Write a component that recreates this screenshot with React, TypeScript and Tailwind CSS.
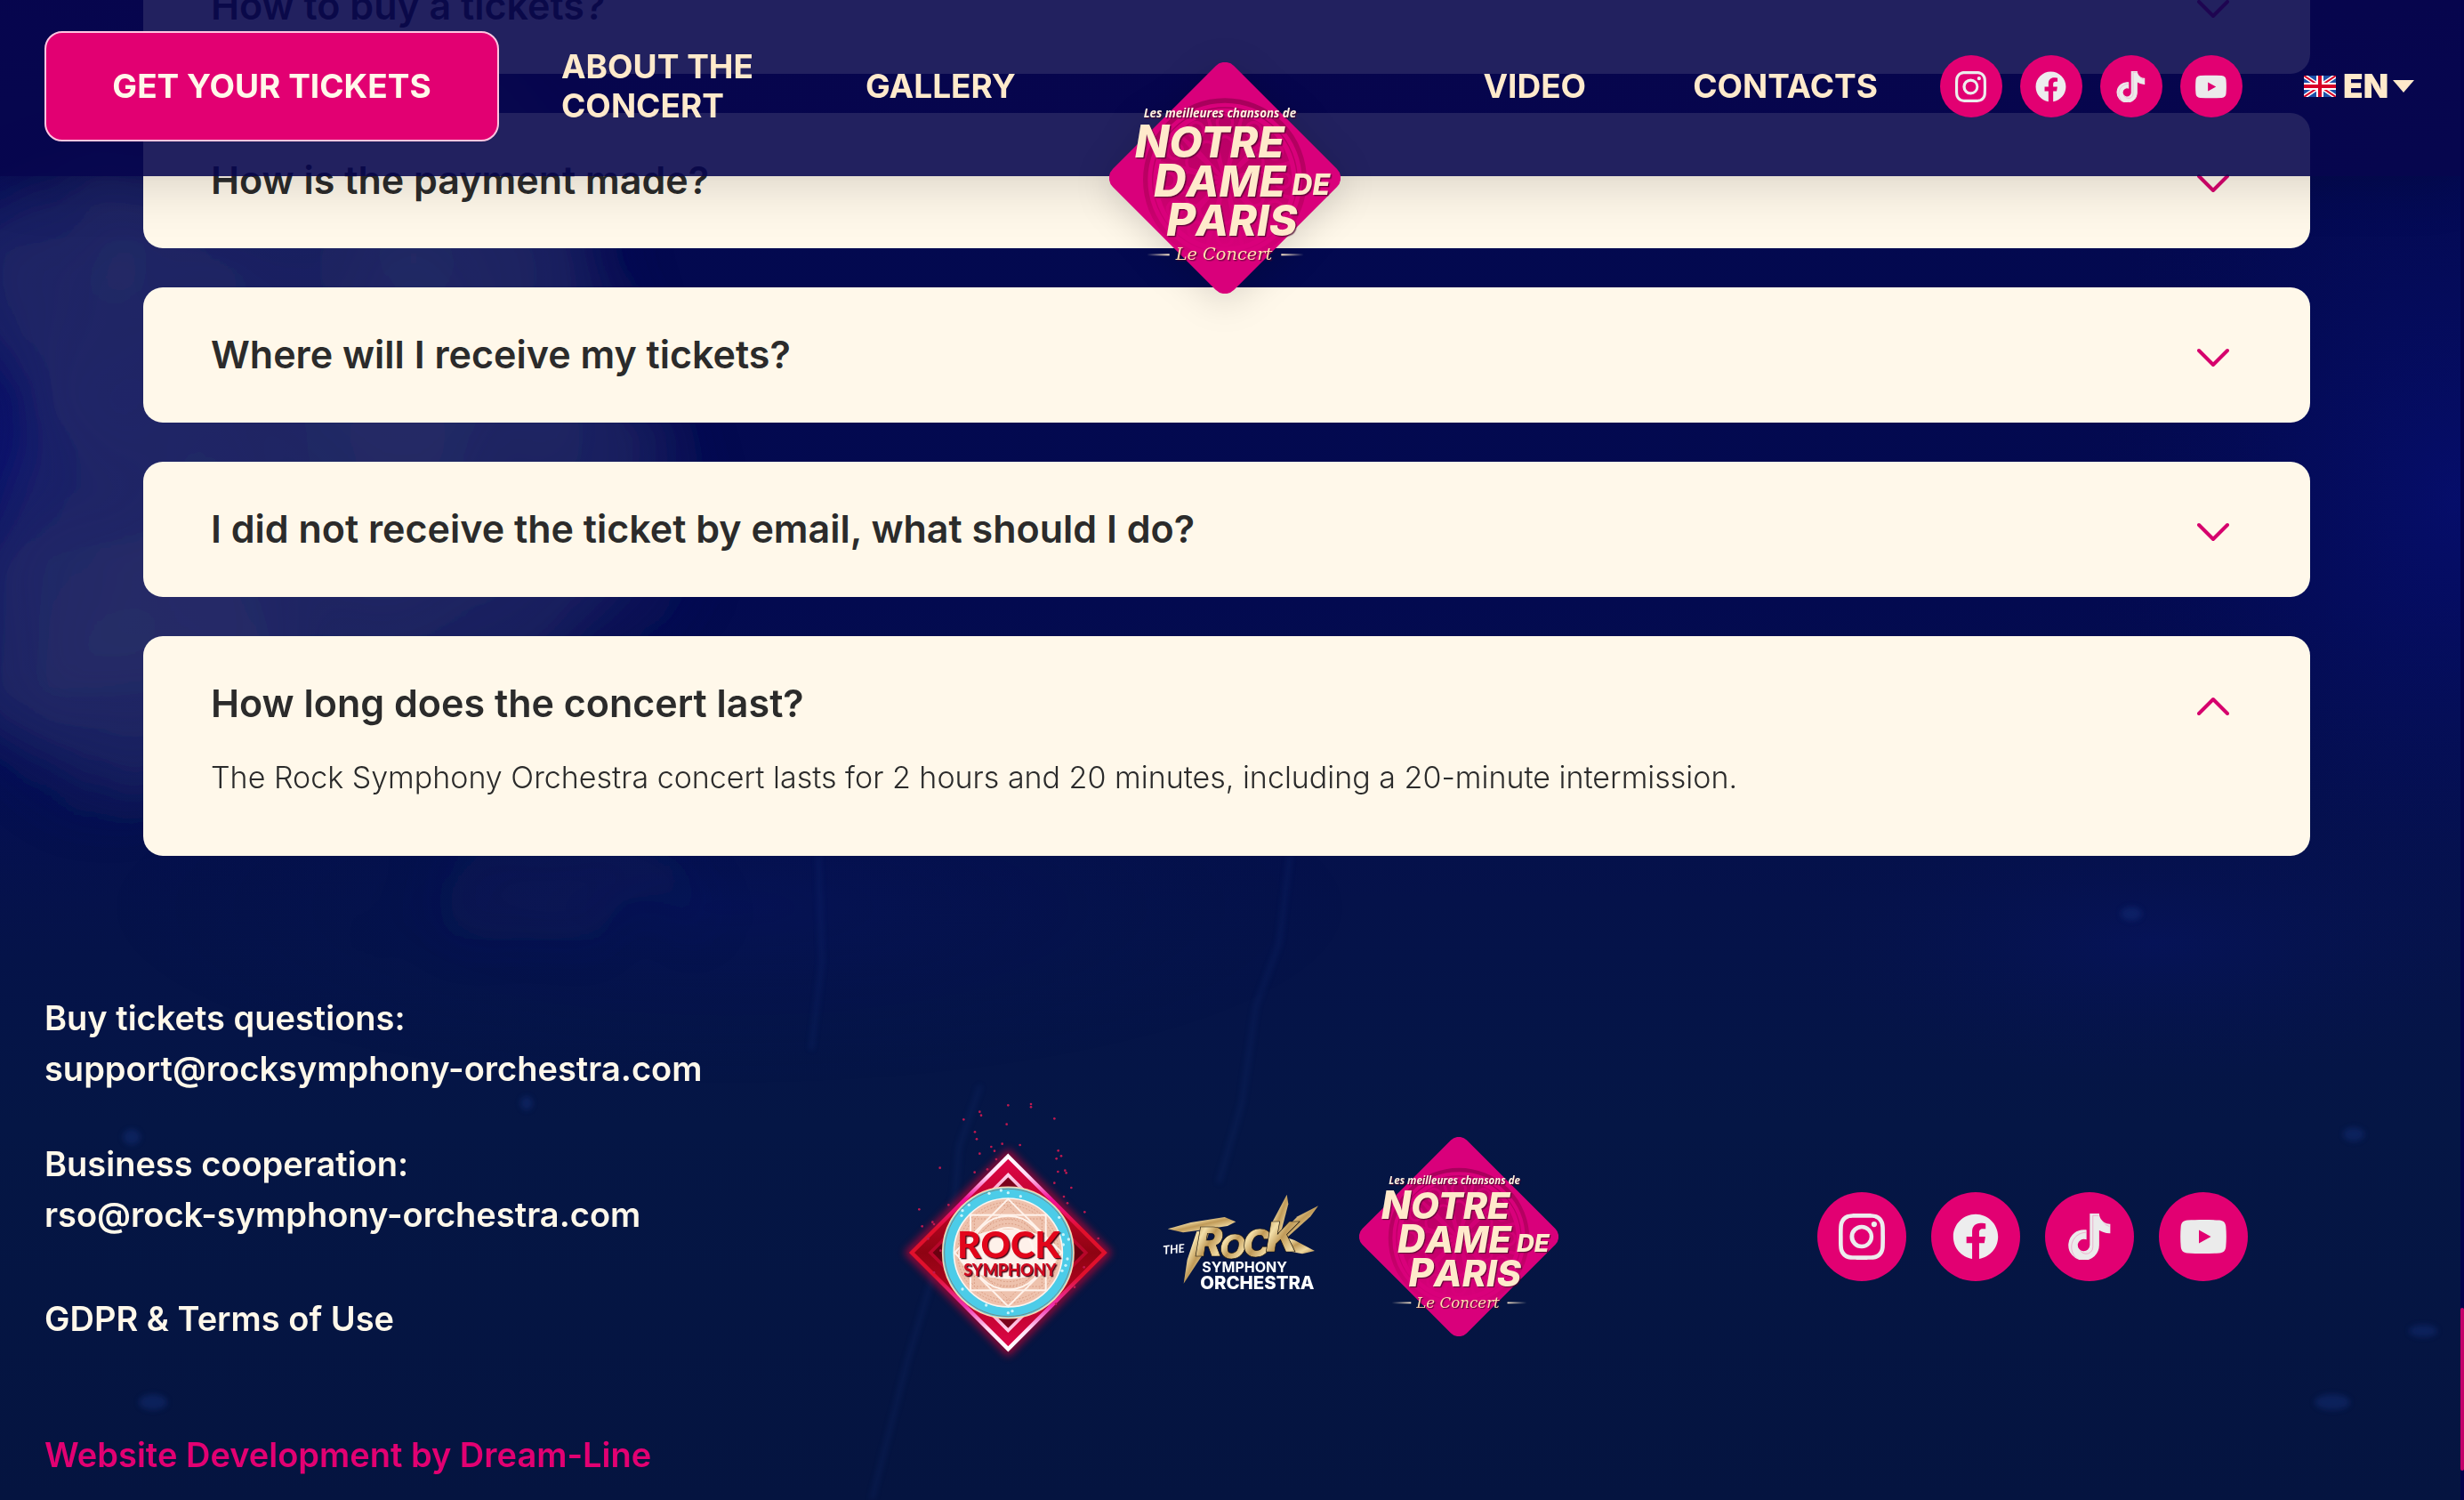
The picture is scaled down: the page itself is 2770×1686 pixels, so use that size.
import { useState } from 'react';
import { BsInstagram } from 'react-icons/bs';
import { FaFacebook } from 'react-icons/fa';

const faqItems = [
    { question: 'How to buy a tickets?', answer: '' },
    { question: 'How is the payment made?', answer: '' },
    { question: 'Where will I receive my tickets?', answer: '' },
    { question: 'I did not receive the ticket by email, what should I do?', answer: '' },
    {
        question: 'How long does the concert last?',
        answer: 'The Rock Symphony Orchestra concert lasts for 2 hours and 20 minutes, including a 20-minute intermission.'
    }
];

const petals = [0, 30, 60, 90, 120, 150, 180, 210, 240, 270, 300, 330];

const tiktokPath =
    'M448,209.91a210.06,210.06,0,0,1-122.77-39.25V349.38A162.55,162.55,0,1,1,185,188.31V278.2a74.62,74.62,0,1,0,52.23,71.18V0l88,0a121.18,121.18,0,0,0,1.86,22.17h0A122.18,122.18,0,0,0,381,102.39a121.43,121.43,0,0,0,67,20.14Z';

function TiktokIcon({ className }: { className?: string }) {
    return (
        <svg viewBox="0 0 512 512" className={className} fill="none">
            <clipPath id="tiktok-clip">
                <path d={tiktokPath} />
            </clipPath>
            <g transform="translate(30 0)">
                <path d={tiktokPath} fill="#ebebeb" stroke="#ebebeb" strokeWidth="16" />
                <g clipPath="url(#tiktok-clip)" stroke="#f07ab4" strokeWidth="5">
                    <path d={tiktokPath} transform="translate(26 22)" />
                </g>
            </g>
        </svg>
    );
}

function YoutubeIcon({ className }: { className?: string }) {
    return (
        <svg viewBox="0 0 52 52" className={className}>
            <path
                fill="#ebebeb"
                fillRule="evenodd"
                d="M8 7.6C19 6.8 33 6.8 44 7.6c4.6.4 6.8 2.8 7.3 7C52 22 52 30 51.3 37.400c-.5 4.200-2.700 6.600-7.300 7-11 .8-25 .8-36 0-4.600-.4-6.800-2.800-7.300-7C0 30 0 22 .7 14.600c.5-4.200 2.700-6.600 7.300-7ZM21 18.500v15L34.500 26Z"
            />
        </svg>
    );
}

const socials = [
    { label: 'Instagram', icon: BsInstagram },
    { label: 'Facebook', icon: FaFacebook },
    { label: 'TikTok', icon: TiktokIcon },
    { label: 'YouTube', icon: YoutubeIcon }
];

function ConcertLogo({ className }: { className?: string }) {
    return (
        <svg viewBox="78 59 780 780" className={className} role="img" aria-label="Notre Dame de Paris, Le Concert">
            <defs>
                <linearGradient id="rose-fade" x1="0" y1="0" x2="0" y2="1">
                    <stop offset="0" stopColor="#a8005c" />
                    <stop offset="0.6" stopColor="#b8005f" stopOpacity="0.8" />
                    <stop offset="1" stopColor="#c80070" stopOpacity="0.3" />
                </linearGradient>
                <linearGradient id="line-left">
                    <stop offset="0" stopColor="#ffeacb" stopOpacity="0" />
                    <stop offset="1" stopColor="#ffeacb" />
                </linearGradient>
                <linearGradient id="line-right">
                    <stop offset="0" stopColor="#ffeacb" />
                    <stop offset="1" stopColor="#ffeacb" stopOpacity="0" />
                </linearGradient>
            </defs>
            <rect x="179" y="160" width="578" height="578" rx="44" fill="#d9007b" transform="rotate(45 468 449)" />
            <g fill="none" stroke="url(#rose-fade)">
                <circle cx="468" cy="456" r="268" strokeWidth="16" />
                <circle cx="468" cy="456" r="244" strokeWidth="4" />
            </g>
            <circle cx="468" cy="456" r="226" fill="url(#rose-fade)" opacity="0.75" />
            <g fill="none" stroke="#d9007b" strokeWidth="10" opacity="0.7">
                {petals.map((angle) => (
                    <g key={angle} transform={`rotate(${angle} 468 456)`}>
                        <path d="M468 456 L440 330 Q468 290 496 330 Z" />
                        <path d="M440 330 L408 238 M496 330 L528 238" />
                        <circle cx="468" cy="262" r="26" />
                    </g>
                ))}
            </g>
            <g
                className="drop-shadow-[4px_4px_1px_rgba(70,0,40,0.75)]"
                fill="#ffeacb"
                fontFamily="Inter, sans-serif"
                fontStyle="italic"
                fontWeight="800"
            >
                <text x="194" y="244" fontSize="40" fontWeight="700" fill="#fff3e0" fontFamily="'Open Sans', sans-serif">
                    Les meilleures chansons de
                </text>
                <text x="164" y="381" fontSize="144">
                    <tspan fontSize="152">N</tspan>OTRE
                </text>
                <text x="228" y="513" fontSize="144">
                    <tspan fontSize="152">D</tspan>AME
                </text>
                <text x="271" y="643" fontSize="144">
                    <tspan fontSize="152">P</tspan>ARIS
                </text>
                <text x="694" y="507" fontSize="96">DE</text>
                <text x="302" y="726" fontSize="58" fontWeight="400" fill="#ffdfae" fontFamily="'DejaVu Serif', serif">
                    Le Concert
                </text>
            </g>
            <rect x="205" y="705" width="76" height="6" fill="url(#line-left)" />
            <rect x="658" y="705" width="76" height="6" fill="url(#line-right)" />
        </svg>
    );
}

const sparks = [
    [400, 70], [477, 66], [477, 76], [304, 92], [309, 104], [250, 118], [556, 115], [395, 134], [288, 160],
    [294, 184], [380, 200], [440, 204], [343, 210], [354, 224], [304, 233], [569, 223], [579, 241], [563, 250],
    [170, 281], [287, 296], [568, 294], [592, 290], [596, 298], [556, 332], [613, 348], [588, 378], [600, 400],
    [100, 421], [658, 430], [199, 406], [110, 478], [145, 464], [150, 471], [704, 519], [624, 683], [561, 740],
    [130, 520], [172, 560], [656, 616], [150, 634], [330, 286], [360, 252]
];

const glints = [
    [268, 406], [246, 425], [243, 442], [400, 365], [376, 357], [442, 377], [336, 367], [586, 506], [604, 522],
    [586, 540], [594, 610], [582, 628], [600, 588], [246, 690], [326, 744], [400, 770], [414, 764], [572, 448]
];

function RockSymphonyLogo() {
    return (
        <svg viewBox="0 0 810 1026" className="h-[342px] w-[270px]" role="img" aria-label="Rock Symphony">
            <defs>
                <linearGradient id="rs-edge" x1="0" y1="0" x2="0" y2="1">
                    <stop offset="0" stopColor="#ffffff" />
                    <stop offset="0.1" stopColor="#ffd9f6" />
                    <stop offset="0.22" stopColor="#f5109a" />
                    <stop offset="0.38" stopColor="#e0102c" />
                    <stop offset="0.62" stopColor="#e0102c" />
                    <stop offset="0.78" stopColor="#f030b0" />
                    <stop offset="0.9" stopColor="#ffe0f4" />
                    <stop offset="1" stopColor="#ffffff" />
                </linearGradient>
                <linearGradient id="rs-fill" x1="0" y1="0" x2="0" y2="1">
                    <stop offset="0" stopColor="#e0054a" />
                    <stop offset="0.35" stopColor="#b0041f" />
                    <stop offset="0.5" stopColor="#8e0312" />
                    <stop offset="0.7" stopColor="#b0041f" />
                    <stop offset="1" stopColor="#e0054a" />
                </linearGradient>
                <linearGradient id="rs-inner" x1="0" y1="0" x2="0" y2="1">
                    <stop offset="0" stopColor="#ffd0ea" />
                    <stop offset="0.12" stopColor="#f8a0cc" />
                    <stop offset="0.28" stopColor="#b8062a" />
                    <stop offset="0.72" stopColor="#b8062a" />
                    <stop offset="0.88" stopColor="#f8a0cc" />
                    <stop offset="1" stopColor="#ffd0ea" />
                </linearGradient>
                <filter id="rs-glow" x="-20%" y="-20%" width="140%" height="140%">
                    <feGaussianBlur stdDeviation="14" />
                </filter>
            </defs>
            <path d="M400 236 731 567 400 898 69 567Z" fill="none" stroke="#e0002f" strokeWidth="26" opacity="0.75" filter="url(#rs-glow)" />
            <path d="M400 242 725 567 400 892 75 567Z" fill="url(#rs-fill)" stroke="url(#rs-edge)" strokeWidth="13" />
            <path d="M400 305 662 567 400 829 138 567Z" fill="#5a0210" fillOpacity="0.7" stroke="url(#rs-inner)" strokeWidth="11" />
            <circle cx="400" cy="567" r="221" fill="#4ccce8" stroke="#f3d7b4" strokeWidth="5" />
            <circle cx="400" cy="567" r="215" fill="none" stroke="#8a6a58" strokeWidth="2" />
            <circle cx="400" cy="567" r="183" fill="#eec2ad" stroke="#fff4ee" strokeWidth="5" />
            <g fill="none" stroke="#d99a80" strokeWidth="3" strokeDasharray="5 6">
                <circle cx="400" cy="567" r="170" />
                <circle cx="400" cy="567" r="160" />
                <circle cx="400" cy="567" r="112" />
                <circle cx="400" cy="567" r="98" />
                <rect x="286" y="453" width="228" height="228" />
                <path d="M400 410 557 567 400 724 243 567Z" />
            </g>
            <g fill="none" stroke="#fff3ec" strokeWidth="6">
                <rect x="273" y="440" width="254" height="254" />
                <path d="M400 386 581 567 400 748 219 567Z" />
                <circle cx="400" cy="567" r="124" />
                <circle cx="400" cy="567" r="84" />
            </g>
            <ellipse cx="400" cy="572" rx="168" ry="84" fill="#fff6f1" opacity="0.9" />
            <g
                className="drop-shadow-[4px_4px_0_#4a0a18]"
                fontFamily="Lato, sans-serif"
                fontWeight="900"
                textAnchor="middle"
            >
                <text x="402" y="586" fontSize="124" fill="#e3061b">ROCK</text>
                <text x="406" y="646" fontSize="54" fill="#d20a20">SYMPHONY</text>
            </g>
            <g fill="#c01850">
                {sparks.map(([x, y]) => (
                    <circle key={`${x}-${y}`} cx={x} cy={y} r="4" />
                ))}
            </g>
            <g fill="#c9f4fb">
                {glints.map(([x, y]) => (
                    <circle key={`${x}-${y}`} cx={x} cy={y} r="5" />
                ))}
            </g>
        </svg>
    );
}

function OrchestraLogo() {
    return (
        <svg viewBox="-30 0 720 480" className="h-[160px] w-[240px]" role="img" aria-label="The Rock Symphony Orchestra">
            <defs>
                <linearGradient id="gold" x1="0" y1="0" x2="1" y2="1">
                    <stop offset="0" stopColor="#b48a44" />
                    <stop offset="0.3" stopColor="#f3dfa8" />
                    <stop offset="0.5" stopColor="#c09a58" />
                    <stop offset="0.75" stopColor="#f0d9a0" />
                    <stop offset="1" stopColor="#b08642" />
                </linearGradient>
            </defs>
            {/* brush swashes round the word */}
            <g fill="url(#gold)">
                <path d="M98 214 176 192 290 174 328 190 300 204 206 218 150 226Z" />
                <path d="M196 222 240 218 214 304 152 398 164 318Z" />
                <path d="M446 200 500 98 505 130 474 250 440 270Z" />
                <path d="M472 236 536 172 606 136 580 172 500 244Z" />
                <path d="M474 234 526 252 594 288 552 298 500 288Z" />
            </g>
            <g fill="url(#gold)" stroke="#16100a" strokeWidth="2" fontFamily="Inter, sans-serif" fontWeight="900" fontStyle="italic">
                <text x="192" y="306" fontSize="138">R</text>
                <text x="272" y="314" fontSize="116">O</text>
                <text x="350" y="308" fontSize="130">C</text>
                <text x="430" y="290" fontSize="142">K</text>
            </g>
            <text x="84" y="300" fontSize="40" fill="#ffffff" fontFamily="Lato, sans-serif" fontStyle="italic" fontWeight="700" transform="rotate(-6 84 300)">
                THE
            </text>
            <g fill="#ffffff" fontFamily="Inter, sans-serif" fontWeight="800">
                <text x="214" y="361" fontSize="48" fontWeight="700">SYMPHONY</text>
                <text x="208" y="416" fontSize="61">ORCHESTRA</text>
            </g>
        </svg>
    );
}

function UkFlag() {
    return (
        <svg viewBox="0 0 36 24" className="h-6 w-9 shrink-0" aria-hidden="true">
            <rect width="36" height="24" fill="#1b4fa8" />
            <path d="M0 0 36 24M36 0 0 24" stroke="#ffffff" strokeWidth="5" />
            <path d="M0 0 36 24M36 0 0 24" stroke="#d80027" strokeWidth="2" />
            <path d="M18 0V24M0 12H36" stroke="#ffffff" strokeWidth="8" />
            <path d="M18 0V24M0 12H36" stroke="#d80027" strokeWidth="4" />
        </svg>
    );
}

function SmokeBackground() {
    return (
        <svg viewBox="0 0 2770 1686" preserveAspectRatio="none" className="absolute inset-0 h-full w-full" aria-hidden="true">
            <defs>
                <linearGradient id="sky" x1="0" y1="0" x2="0" y2="1">
                    <stop offset="0" stopColor="#03084f" />
                    <stop offset="0.4" stopColor="#030a50" />
                    <stop offset="0.6" stopColor="#05124a" />
                    <stop offset="0.75" stopColor="#051645" />
                    <stop offset="1" stopColor="#051440" />
                </linearGradient>
                <radialGradient id="smoke">
                    <stop offset="0" stopColor="#2a3068" stopOpacity="0.85" />
                    <stop offset="0.65" stopColor="#262c68" stopOpacity="0.6" />
                    <stop offset="1" stopColor="#1a2064" stopOpacity="0" />
                </radialGradient>
                <radialGradient id="haze">
                    <stop offset="0" stopColor="#0a149a" stopOpacity="0.5" />
                    <stop offset="1" stopColor="#061060" stopOpacity="0" />
                </radialGradient>
                <filter id="billow" x="-20%" y="-20%" width="140%" height="140%">
                    <feTurbulence type="fractalNoise" baseFrequency="0.005 0.004" numOctaves="3" seed="7" />
                    <feDisplacementMap in="SourceGraphic" scale="180" xChannelSelector="R" yChannelSelector="G" />
                    <feGaussianBlur stdDeviation="22" />
                </filter>
                <filter id="soft">
                    <feGaussianBlur stdDeviation="3" />
                </filter>
            </defs>
            <rect width="2770" height="1686" fill="url(#sky)" />
            <ellipse cx="20" cy="520" rx="420" ry="560" fill="url(#haze)" opacity="0.8" />
            <g filter="url(#billow)">
                <ellipse cx="470" cy="320" rx="300" ry="260" fill="url(#smoke)" />
                <ellipse cx="430" cy="580" rx="380" ry="280" fill="url(#smoke)" />
                <ellipse cx="120" cy="320" rx="220" ry="190" fill="url(#smoke)" />
                <ellipse cx="160" cy="580" rx="180" ry="260" fill="url(#smoke)" opacity="0.8" />
                <ellipse cx="120" cy="740" rx="260" ry="210" fill="url(#smoke)" />
                <ellipse cx="620" cy="1010" rx="200" ry="90" fill="url(#smoke)" opacity="0.2" />
            </g>
            <ellipse cx="2760" cy="560" rx="420" ry="560" fill="url(#haze)" opacity="0.7" />
            <ellipse cx="2420" cy="1060" rx="420" ry="160" fill="url(#haze)" opacity="0.35" />
            <ellipse cx="820" cy="1020" rx="700" ry="200" fill="url(#haze)" opacity="0.25" />
            {/* fine scratches */}
            <g fill="none" stroke="#1a3a86" strokeWidth="5" opacity="0.22" filter="url(#soft)">
                <path d="M1450 962 1438 1060 1412 1130 1396 1240 1370 1330" />
                <path d="M1102 1220 1078 1290 1074 1340 1044 1450 1020 1530 980 1686" />
                <path d="M920 962 924 1080 912 1180" />
            </g>
            <g fill="#12327c" opacity="0.45" filter="url(#soft)">
                <ellipse cx="2396" cy="1027" rx="12" ry="8" />
                <ellipse cx="2646" cy="1275" rx="12" ry="8" />
                <ellipse cx="2724" cy="1496" rx="16" ry="7" />
                <ellipse cx="2622" cy="1576" rx="20" ry="9" />
                <ellipse cx="172" cy="1576" rx="16" ry="9" />
                <ellipse cx="148" cy="1278" rx="10" ry="9" />
                <ellipse cx="592" cy="1240" rx="7" ry="8" />
            </g>
        </svg>
    );
}

function Header() {
    return (
        <header className="fixed inset-x-0 top-0 z-20 grid h-[198px] grid-cols-[1196fr_260fr_1206fr] items-center bg-[#07064d]/89 pr-14 pb-1 pl-[50px] text-[37px] leading-[44px] font-bold text-[#ffeacb] shadow-[0_0_70px_rgba(0,0,0,0.2)]">
            <div className="flex items-center">
                <button
                    type="button"
                    className="h-[124px] w-[511px] shrink-0 rounded-[20px] border-2 border-[#ffc4e0] bg-[#e20072] text-[#fff8ea]"
                >
                    GET YOUR TICKETS
                </button>
                <nav className="ml-[70px] flex items-center gap-[118px]">
                    <a href="#about" className="w-[224px]">ABOUT THE CONCERT</a>
                    <a href="#gallery">GALLERY</a>
                </nav>
            </div>
            <a href="#top" className="relative h-[120px]">
                <ConcertLogo className="absolute top-[33px] left-0 h-[260px] w-[260px] drop-shadow-[0_8px_20px_rgba(0,0,0,0.15)]" />
            </a>
            <div className="flex items-center justify-end">
                <nav className="flex gap-[120px]">
                    <a href="#video">VIDEO</a>
                    <a href="#contacts">CONTACTS</a>
                </nav>
                <div className="ml-[70px] flex gap-5">
                    {socials.map((social) => (
                        <a
                            key={social.label}
                            href="#"
                            aria-label={social.label}
                            className="flex h-[70px] w-[70px] items-center justify-center rounded-full bg-[#e20072] text-[#ededee]"
                        >
                            <social.icon className="h-[35px] w-[35px]" />
                        </a>
                    ))}
                </div>
                <label className="ml-[69px] flex items-center">
                    <UkFlag />
                    <select aria-label="Language" className="ml-2 w-[56px] appearance-none bg-transparent font-black outline-none">
                        <option>EN</option>
                    </select>
                    <svg viewBox="0 0 24 14" className="h-[14px] w-6" fill="#ffeacb" aria-hidden="true">
                        <path d="M0 0h24L12 14z" />
                    </svg>
                </label>
            </div>
        </header>
    );
}

function Faq() {
    const [openIndex, setOpenIndex] = useState(4);

    return (
        <main className="mt-[-69px] flex flex-col gap-11 pr-[173px] pl-[161px]">
            {faqItems.map((item, index) => {
                const open = index === openIndex;
                return (
                    <section key={item.question} className="rounded-[22px] bg-[#fff8ea] text-[#2b2b2b]">
                        <button
                            type="button"
                            aria-expanded={open}
                            onClick={() => setOpenIndex(open ? -1 : index)}
                            className="flex h-[152px] w-full items-center justify-between pr-[91px] pb-[2px] pl-[76px] text-left text-[43px] font-semibold"
                        >
                            {item.question}
                            <svg
                                viewBox="0 0 36 36"
                                className={open ? 'mt-2 h-9 w-9 rotate-180' : 'mt-2 h-9 w-9'}
                                fill="none"
                                stroke="#d6006d"
                                strokeWidth="4"
                                strokeLinecap="round"
                                strokeLinejoin="round"
                            >
                                <path d="M2 10 18 26 34 10" />
                            </svg>
                        </button>
                        {open && item.answer && (
                            <p className="mt-[-17px] px-[76px] pb-16 text-[34px] leading-[48px] font-light">{item.answer}</p>
                        )}
                    </section>
                );
            })}
        </main>
    );
}

function Footer() {
    return (
        <footer className="mt-[154px] grid grid-cols-3 items-center gap-[30px] px-[50px] pb-5">
            <div className="text-[38px] leading-[57px] font-semibold whitespace-nowrap text-[#fff8ea]">
                <p>Buy tickets questions:</p>
                <a href="mailto:support@rocksymphony-orchestra.com" className="block">support@rocksymphony-orchestra.com</a>
                <p className="mt-[50px]">Business cooperation:</p>
                <a href="mailto:rso@rock-symphony-orchestra.com" className="block">rso@rock-symphony-orchestra.com</a>
                <a href="#terms" className="mt-[60px] block">GDPR &amp; Terms of Use</a>
                <a href="#dream-line" className="mt-24 block text-[#e20072]">Website Development by Dream-Line</a>
            </div>
            <div className="flex items-center justify-center">
                <RockSymphonyLogo />
                <OrchestraLogo />
                <ConcertLogo className="mx-[18px] h-[224px] w-[224px]" />
            </div>
            <div className="flex justify-center gap-7">
                {socials.map((social) => (
                    <a
                        key={social.label}
                        href="#"
                        aria-label={social.label}
                        className="flex h-[100px] w-[100px] items-center justify-center rounded-full bg-[#e20072] text-[#ededee]"
                    >
                        <social.icon className="h-[52px] w-[52px]" />
                    </a>
                ))}
            </div>
        </footer>
    );
}

function App() {
    return (
        <div className="relative min-h-screen overflow-hidden bg-[#051440] font-[Inter,sans-serif]">
            <SmokeBackground />
            <Header />
            <div className="relative">
                <Faq />
                <Footer />
            </div>
            <div className="fixed inset-y-0 right-0 z-30 flex w-1 items-end bg-[#03004a] pb-[33px]">
                <div className="h-[183px] w-full rounded-sm bg-[#c4006a]" />
            </div>
        </div>
    );
}

export default App;
